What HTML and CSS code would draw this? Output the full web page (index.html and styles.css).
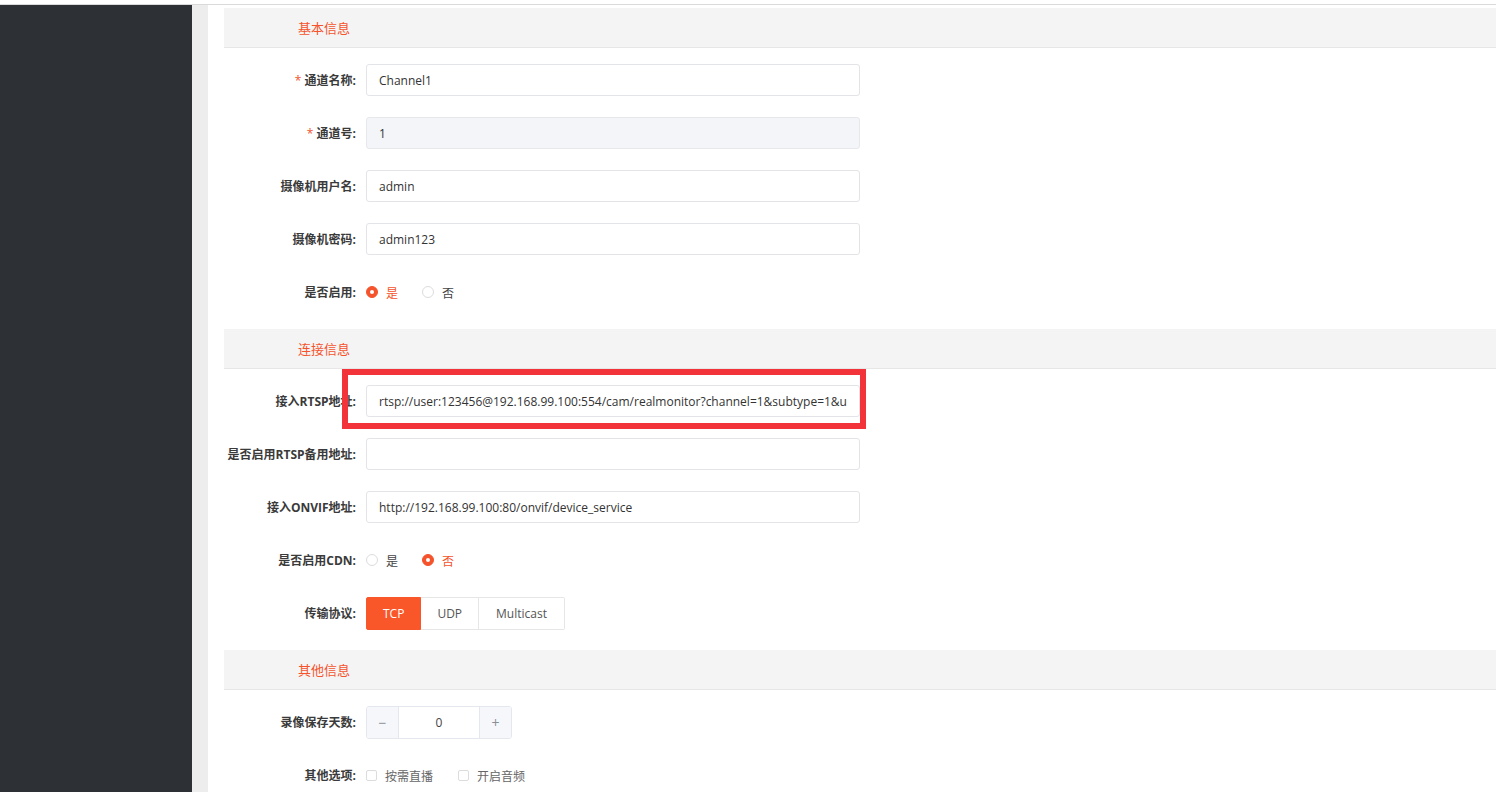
FILE: index.html
```html
<!DOCTYPE html>
<html lang="zh-CN">
<head>
<meta charset="utf-8">
<title>通道配置</title>
<link rel="stylesheet" href="styles.css">
</head>
<body>
<div class="topline"></div>
<div class="layout">
  <aside class="sidebar"></aside>
  <div class="gutter"></div>
  <main class="main">
    <section class="section">
      <div class="section-head">基本信息</div>
      <div class="section-body">
        <div class="item">
          <label class="label"><span class="req">*</span> 通道名称:</label>
          <input class="input" type="text" value="Channel1" readonly>
        </div>
        <div class="item">
          <label class="label"><span class="req">*</span> 通道号:</label>
          <input class="input input-disabled" type="text" value="1" readonly>
        </div>
        <div class="item">
          <label class="label">摄像机用户名:</label>
          <input class="input" type="text" value="admin" readonly>
        </div>
        <div class="item">
          <label class="label">摄像机密码:</label>
          <input class="input" type="text" value="admin123" readonly>
        </div>
        <div class="item">
          <label class="label">是否启用:</label>
          <div class="radios">
            <span class="radio checked"><span class="dot"></span><span class="radio-text">是</span></span>
            <span class="radio"><span class="dot"></span><span class="radio-text">否</span></span>
          </div>
        </div>
      </div>
    </section>

    <section class="section">
      <div class="section-head">连接信息</div>
      <div class="section-body">
        <div class="item highlighted">
          <label class="label">接入RTSP地址:</label>
          <input class="input" type="text" value="rtsp://user:123456@192.168.99.100:554/cam/realmonitor?channel=1&amp;subtype=1&amp;unicast=true&amp;proto=Onvif" readonly>
          <div class="mark-box"></div>
        </div>
        <div class="item">
          <label class="label">是否启用RTSP备用地址:</label>
          <input class="input" type="text" value="" readonly>
        </div>
        <div class="item">
          <label class="label">接入ONVIF地址:</label>
          <input class="input" type="text" value="http://192.168.99.100:80/onvif/device_service" readonly>
        </div>
        <div class="item">
          <label class="label">是否启用CDN:</label>
          <div class="radios">
            <span class="radio"><span class="dot"></span><span class="radio-text">是</span></span>
            <span class="radio checked"><span class="dot"></span><span class="radio-text">否</span></span>
          </div>
        </div>
        <div class="item">
          <label class="label">传输协议:</label>
          <div class="btn-group">
            <span class="btn active">TCP</span>
            <span class="btn">UDP</span>
            <span class="btn">Multicast</span>
          </div>
        </div>
      </div>
    </section>

    <section class="section">
      <div class="section-head">其他信息</div>
      <div class="section-body">
        <div class="item">
          <label class="label">录像保存天数:</label>
          <div class="number">
            <span class="num-btn">−</span>
            <span class="num-val">0</span>
            <span class="num-btn">+</span>
          </div>
        </div>
        <div class="item">
          <label class="label">其他选项:</label>
          <div class="checks">
            <span class="check"><span class="box"></span><span class="check-text">按需直播</span></span>
            <span class="check"><span class="box"></span><span class="check-text">开启音频</span></span>
          </div>
        </div>
      </div>
    </section>
  </main>
</div>
</body>
</html>
```

FILE: styles.css
```css
* {
  box-sizing: border-box;
}

html, body {
  margin: 0;
  padding: 0;
  height: 100%;
  overflow: hidden;
  background: #ffffff;
  font-family: "Open Sans", "Noto Sans CJK SC", sans-serif;
  font-size: 12px;
  color: #333333;
}

.topline {
  height: 5px;
  background: #ffffff;
  border-bottom: 1px solid #dadada;
}

.layout {
  display: flex;
  height: calc(100vh - 5px);
}

.sidebar {
  width: 192px;
  flex: none;
  background: #2d3034;
}

.gutter {
  width: 16px;
  flex: none;
  background: #ededed;
}

.main {
  flex: 1;
  background: #ffffff;
  padding: 3px 0 0 16px;
}

.section-head {
  height: 40px;
  background: #f4f4f4;
  border-bottom: 1px solid #e6e6e6;
  padding-left: 74px;
  display: flex;
  align-items: center;
  font-family: "Noto Sans CJK SC", sans-serif;
  font-size: 13px;
  color: #f4532c;
}

.section-body {
  padding-top: 16px;
}

.item {
  position: relative;
  display: flex;
  align-items: center;
  height: 32px;
  margin-bottom: 21px;
}

.label {
  width: 142px;
  flex: none;
  padding-right: 10px;
  text-align: right;
  font-family: "Open Sans", "Noto Sans CJK SC", sans-serif;
  font-weight: 700;
  font-size: 12px;
  color: #3a3a3a;
  white-space: nowrap;
}

.req {
  color: #f4532c;
  font-weight: 400;
}

.input {
  width: 494px;
  height: 32px;
  padding: 0 12px;
  border: 1px solid #e2e4e8;
  border-radius: 3px;
  background: #ffffff;
  font-family: "Open Sans", "Noto Sans CJK SC", sans-serif;
  font-size: 12px;
  color: #333333;
  outline: none;
}

.input-disabled {
  background: #f3f5f8;
  border-color: #e6e8ec;
}

.mark-box {
  position: absolute;
  left: 118px;
  top: -16px;
  width: 524px;
  height: 60px;
  border: 6px solid #f2343a;
  pointer-events: none;
}

.radios {
  display: flex;
  align-items: center;
}

.radio {
  display: inline-flex;
  align-items: center;
  margin-right: 24px;
  font-family: "Noto Sans CJK SC", sans-serif;
  font-size: 12px;
  color: #444444;
}

.radio .dot {
  width: 12px;
  height: 12px;
  border-radius: 50%;
  border: 1px solid #dcdcdc;
  background: #ffffff;
  margin-right: 8px;
  position: relative;
}

.radio.checked {
  color: #f4532c;
}

.radio.checked .dot {
  border-color: #f4532c;
  background: #f4532c;
}

.radio.checked .dot::after {
  content: "";
  position: absolute;
  left: 3px;
  top: 3px;
  width: 4px;
  height: 4px;
  border-radius: 50%;
  background: #ffffff;
}

.btn-group {
  display: flex;
  height: 33px;
  margin-top: 1px;
}

.btn {
  display: flex;
  align-items: center;
  padding: 0 16px;
  border: 1px solid #e6e6e6;
  border-left: none;
  background: #ffffff;
  color: #555555;
  font-size: 12px;
}

.btn:first-child {
  border-left: 1px solid #e6e6e6;
  border-radius: 2px 0 0 2px;
}

.btn:last-child {
  padding: 0 17px;
  border-radius: 0 2px 2px 0;
}

.btn.active {
  background: #f9562a;
  border-color: #f9562a;
  color: #ffffff;
}

.number {
  display: flex;
  width: 146px;
  height: 33px;
  margin-top: 1px;
  border: 1px solid #e4e7ed;
  border-radius: 3px;
  overflow: hidden;
}

.num-btn {
  width: 32px;
  flex: none;
  display: flex;
  align-items: center;
  justify-content: center;
  background: #f5f7fa;
  color: #8a8e96;
  font-size: 14px;
}

.num-btn:first-child {
  border-right: 1px solid #e4e7ed;
}

.num-btn:last-child {
  border-left: 1px solid #e4e7ed;
}

.num-val {
  flex: 1;
  display: flex;
  align-items: center;
  justify-content: center;
  color: #444444;
  font-size: 12px;
}

.checks {
  display: flex;
  align-items: center;
}

.check {
  display: inline-flex;
  align-items: center;
  margin-right: 25px;
  font-family: "Noto Sans CJK SC", sans-serif;
  font-size: 12px;
  color: #666666;
}

.check .box {
  width: 11px;
  height: 11px;
  border: 1px solid #dcdcdc;
  border-radius: 2px;
  background: #ffffff;
  margin-right: 8px;
}
```
